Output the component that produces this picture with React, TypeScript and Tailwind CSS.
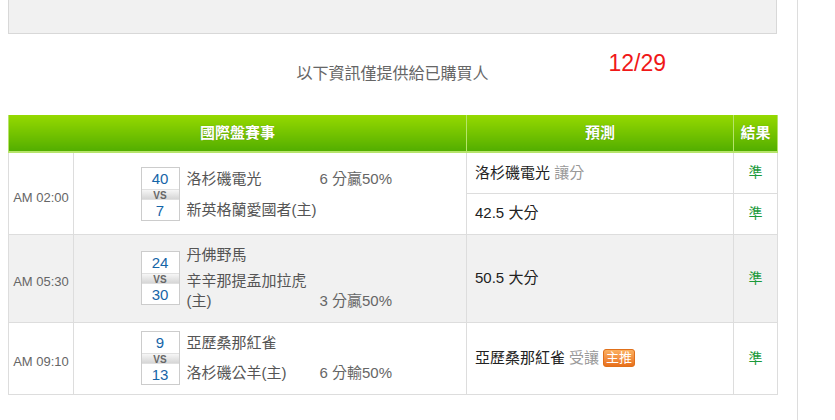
import React from "react";

const FONT = { fontFamily: '"Liberation Sans", "Noto Sans CJK TC", sans-serif' };

type Match = {
  s1: string;
  s2: string;
  n1: string;
  n2: string;
  o1?: string;
  o2?: string;
  gap: string;
};

function ScoreBox({ a, b }: { a: string; b: string }) {
  return (
    <div className="w-[39px] border border-[#cccccc] bg-white text-center">
      <div className="h-[21px] leading-[22px] text-[15px] text-[#1565a8]">{a}</div>
      <div className="h-[11px] leading-[11px] text-[10px] font-bold text-[#666] bg-linear-to-b from-[#f6f6f6] to-[#d6d6d6] border-y border-[#e0e0e0]">
        VS
      </div>
      <div className="h-[20px] leading-[21px] text-[15px] text-[#1565a8]">{b}</div>
    </div>
  );
}

function MatchBlock({ m }: { m: Match }) {
  return (
    <div className="flex items-center justify-center">
      <ScoreBox a={m.s1} b={m.s2} />
      <div className={"ml-[7px] grid grid-cols-[133px_80px] items-end text-[15px] leading-[20px] text-[#555] " + m.gap}>
        <div>{m.n1}</div>
        <div className="whitespace-nowrap text-[#666]">{m.o1 ?? ""}</div>
        <div>{m.n2}</div>
        <div className="whitespace-nowrap text-[#666]">{m.o2 ?? ""}</div>
      </div>
    </div>
  );
}

const td = "border border-[#dddddd] p-0";

export default function App() {
  const m1: Match = { s1: "40", s2: "7", n1: "洛杉磯電光", n2: "新英格蘭愛國者(主)", o1: "6 分贏50%", gap: "gap-y-[11px]" };
  const m2: Match = { s1: "24", s2: "30", n1: "丹佛野馬", n2: "辛辛那提孟加拉虎(主)", o2: "3 分贏50%", gap: "gap-y-[6px]" };
  const m3: Match = { s1: "9", s2: "13", n1: "亞歷桑那紅雀", n2: "洛杉磯公羊(主)", o2: "6 分輸50%", gap: "gap-y-[10px]" };

  const th =
    "h-[37px] p-0 text-center text-[15px] font-bold text-white bg-linear-to-b from-[#95d900] to-[#52ae00] border-x border-b-2 border-[#b6e46a] [text-shadow:0_0_1px_rgba(0,0,0,0.3)]";

  return (
    <div className="flex h-[420px] w-[835px] overflow-hidden bg-white" style={FONT}>
      <div className="h-full w-[798px] border-r border-[#dddddd] pl-[8px]">
        <div className="w-[769px]">
          <div className="h-[34px] border-x border-b border-[#d8d8d8] bg-[#f1f1f1]" />
          <div className="grid h-[81px] grid-cols-[1fr_auto_1fr]">
            <div />
            <div className="pt-[30px] text-[16px] leading-[20px] text-[#666]">以下資訊僅提供給已購買人</div>
            <div className="pl-[120px] pt-[16px] text-[23px] leading-[26px] text-[#f01818]">12/29</div>
          </div>
          <table className="w-[769px] table-fixed border-collapse">
            <colgroup>
              <col className="w-[65px]" />
              <col className="w-[393px]" />
              <col className="w-[267px]" />
              <col className="w-[44px]" />
            </colgroup>
            <thead>
              <tr>
                <th colSpan={2} className={th}>國際盤賽事</th>
                <th className={th}>預測</th>
                <th className={th}>結果</th>
              </tr>
            </thead>
            <tbody>
              <tr className="h-[41px]">
                <td rowSpan={2} className={td + " pt-[8px] text-center align-middle text-[13px] text-[#666]"}>AM 02:00</td>
                <td rowSpan={2} className={td + " pt-[2px] align-middle"}>
                  <MatchBlock m={m1} />
                </td>
                <td className={td + " pl-[8px] align-middle text-[15px] text-[#222]"}>
                  洛杉磯電光 <span className="text-[#999]">讓分</span>
                </td>
                <td className={td + " text-center align-middle text-[14px] text-[#1a9a3a]"}>準</td>
              </tr>
              <tr className="h-[41px]">
                <td className={td + " pl-[8px] align-middle text-[15px] text-[#222]"}>42.5 大分</td>
                <td className={td + " text-center align-middle text-[14px] text-[#1a9a3a]"}>準</td>
              </tr>
              <tr className="h-[88px] bg-[#f1f1f1]">
                <td className={td + " pt-[8px] text-center align-middle text-[13px] text-[#666]"}>AM 05:30</td>
                <td className={td + " align-middle"}>
                  <MatchBlock m={m2} />
                </td>
                <td className={td + " pl-[8px] align-middle text-[15px] text-[#222]"}>50.5 大分</td>
                <td className={td + " text-center align-middle text-[14px] text-[#1a9a3a]"}>準</td>
              </tr>
              <tr className="h-[72px]">
                <td className={td + " pt-[8px] text-center align-middle text-[13px] text-[#666]"}>AM 09:10</td>
                <td className={td + " align-middle"}>
                  <MatchBlock m={m3} />
                </td>
                <td className={td + " pl-[8px] align-middle text-[15px] text-[#222]"}>
                  <span className="inline-flex items-center">
                    亞歷桑那紅雀 <span className="ml-[4px] text-[#999]">受讓</span>
                    <span className="ml-[4px] inline-block h-[18px] rounded-[3px] border border-[#e0701a] bg-linear-to-b from-[#fbb060] to-[#e8701a] px-[2px] text-[13px] leading-[16px] text-white">
                      主推
                    </span>
                  </span>
                </td>
                <td className={td + " text-center align-middle text-[14px] text-[#1a9a3a]"}>準</td>
              </tr>
            </tbody>
          </table>
        </div>
      </div>
    </div>
  );
}
